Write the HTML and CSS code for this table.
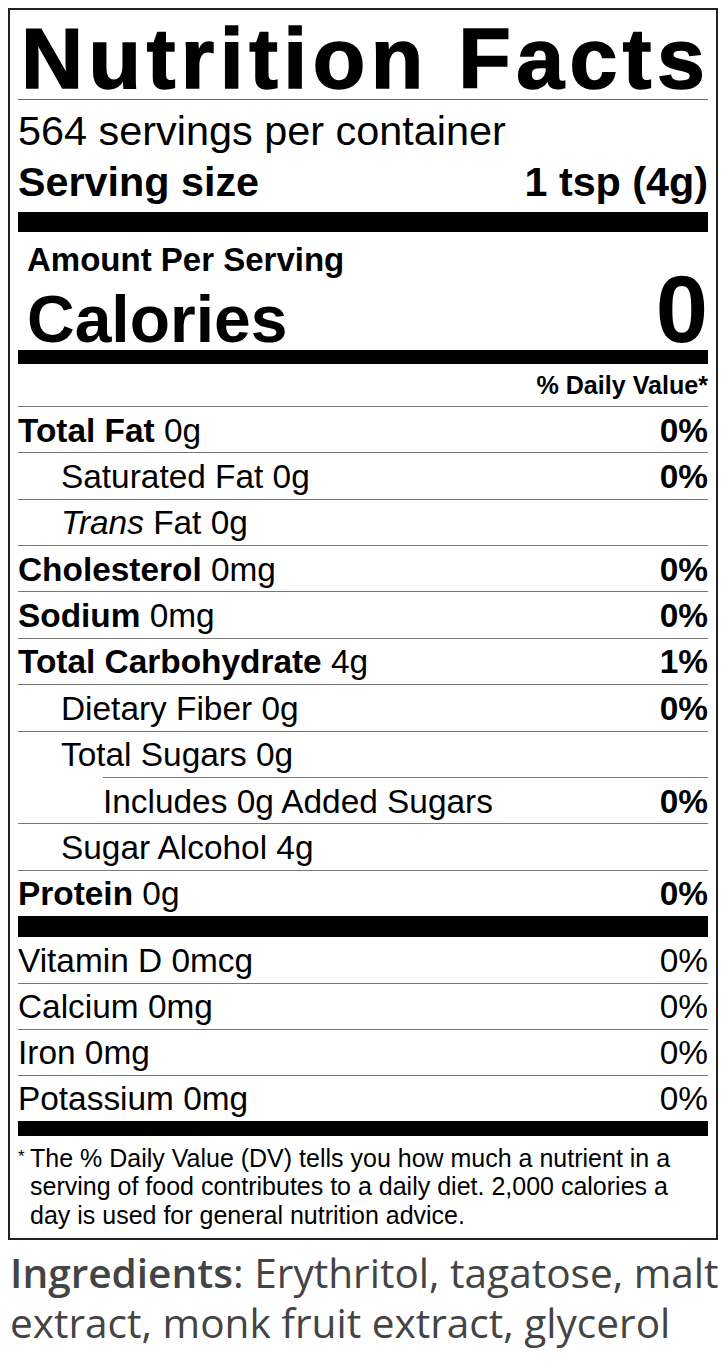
FILE: index.html
```html
<!DOCTYPE html>
<html lang="en">
<head>
<meta charset="utf-8">
<title>Nutrition Facts</title>
<link rel="stylesheet" href="styles.css">
</head>
<body>
<section class="label">
  <h1 class="title">Nutrition Facts</h1>
  <div class="servings">564 servings per container</div>
  <div class="serving-size"><span>Serving size</span><span>1 tsp (4g)</span></div>
  <div class="bar bar-thick"></div>
  <div class="amount">Amount Per Serving</div>
  <div class="calories"><span class="cal-label">Calories</span><span class="cal-value">0</span></div>
  <div class="bar bar-medium"></div>
  <div class="dv-head">% Daily Value*</div>
  <ul class="nutrients">
    <li class="row"><span><b>Total Fat</b> 0g</span><b>0%</b></li>
    <li class="row sub"><span>Saturated Fat 0g</span><b>0%</b></li>
    <li class="row sub"><span><i>Trans</i> Fat 0g</span></li>
    <li class="row"><span><b>Cholesterol</b> 0mg</span><b>0%</b></li>
    <li class="row"><span><b>Sodium</b> 0mg</span><b>0%</b></li>
    <li class="row"><span><b>Total Carbohydrate</b> 4g</span><b>1%</b></li>
    <li class="row sub"><span>Dietary Fiber 0g</span><b>0%</b></li>
    <li class="row sub"><span>Total Sugars 0g</span></li>
    <li class="row subsub"><span>Includes 0g Added Sugars</span><b>0%</b></li>
    <li class="row sub"><span>Sugar Alcohol 4g</span></li>
    <li class="row"><span><b>Protein</b> 0g</span><b>0%</b></li>
  </ul>
  <div class="bar bar-big"></div>
  <ul class="vitamins">
    <li class="row"><span>Vitamin D 0mcg</span><span>0%</span></li>
    <li class="row"><span>Calcium 0mg</span><span>0%</span></li>
    <li class="row"><span>Iron 0mg</span><span>0%</span></li>
    <li class="row"><span>Potassium 0mg</span><span>0%</span></li>
  </ul>
  <div class="bar bar-foot"></div>
  <p class="footnote"><span class="star">*</span>The % Daily Value (DV) tells you how much a nutrient in a serving of food contributes to a daily diet. 2,000 calories a day is used for general nutrition advice.</p>
</section>
<p class="ingredients"><strong>Ingredients</strong>: Erythritol, tagatose, malt extract, monk fruit extract, glycerol</p>
</body>
</html>
```

FILE: styles.css
```css
* {
  box-sizing: border-box;
  margin: 0;
  padding: 0;
}

body {
  background: #fff;
  color: #000;
  font-family: "Liberation Sans", Arial, Helvetica, sans-serif;
}

.label {
  margin: 8px 0 0 8px;
  width: 710px;
  border: 2px solid #222;
  padding: 0 8px;
}

.title {
  height: 90px;
  padding-top: 6px;
  padding-left: 3px;
  font-size: 86px;
  line-height: 84px;
  font-weight: 700;
  letter-spacing: 5.5px;
  white-space: nowrap;
  -webkit-text-stroke: 1.6px #000;
  border-bottom: 1px solid #666;
}

.servings {
  padding-top: 8px;
  font-size: 41.4px;
  line-height: 46px;
}

.serving-size {
  display: flex;
  justify-content: space-between;
  font-size: 41.3px;
  line-height: 56px;
  font-weight: 700;
}

.bar {
  background: #000;
}

.bar-thick {
  height: 20px;
  margin-top: 2px;
}

.bar-medium {
  height: 14px;
}

.bar-big {
  height: 21px;
}

.bar-foot {
  height: 15px;
}

.amount {
  padding-left: 9px;
  font-size: 33px;
  line-height: 55px;
  font-weight: 700;
}

.calories {
  display: flex;
  justify-content: space-between;
  align-items: baseline;
  padding-left: 9px;
  height: 63px;
  font-weight: 700;
}

.cal-label {
  font-size: 66px;
  line-height: 54px;
}

.cal-value {
  font-size: 94px;
  line-height: 46px;
}

.dv-head {
  text-align: right;
  font-size: 25.1px;
  line-height: 42px;
  font-weight: 700;
}

.nutrients,
.vitamins {
  list-style: none;
}

.row {
  display: flex;
  justify-content: space-between;
  align-items: center;
  height: 46.36px;
  border-top: 1px solid #777;
  font-size: 33.4px;
  line-height: 40px;
  padding-top: 2px;
}

.row b {
  font-weight: 700;
}

.row i {
  font-style: italic;
}

.sub {
  padding-left: 43px;
}

.subsub {
  margin-left: 85px;
}

.vitamins .row {
  height: 46px;
}

.vitamins .row:first-child {
  border-top: 0;
}

.footnote {
  position: relative;
  padding: 8px 30px 9px 12px;
  font-size: 25px;
  line-height: 28.5px;
}

.star {
  position: absolute;
  left: 0;
  top: 7px;
  font-size: 17px;
}

.ingredients {
  margin: 8px 0 0 10px;
  font-family: "Open Sans", "Noto Sans", sans-serif;
  font-size: 40.6px;
  line-height: 50px;
  color: #444;
}

.ingredients strong {
  font-weight: 600;
}
```
